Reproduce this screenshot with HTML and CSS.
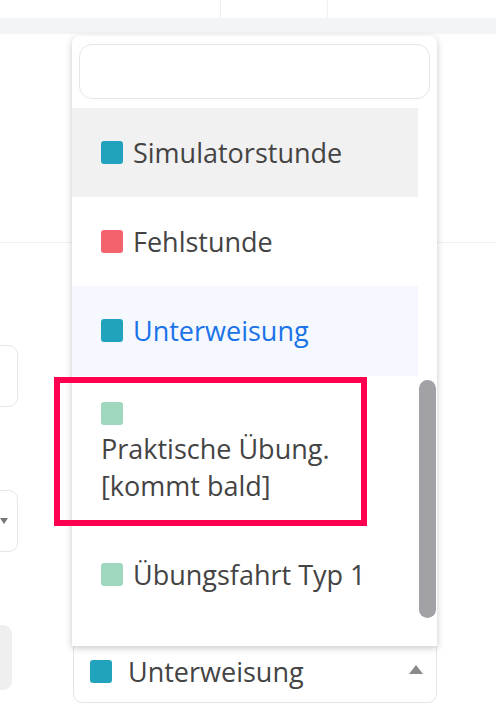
FILE: index.html
```html
<!DOCTYPE html>
<html lang="de">
<head>
<meta charset="utf-8">
<link rel="stylesheet" href="styles.css">
</head>
<body>
<div class="topbar">
  <div class="cell cell-a"></div>
  <div class="cell cell-b"></div>
  <div class="cell cell-c"></div>
</div>
<div class="band"></div>
<div class="page">
  <div class="head-section"></div>
  <div class="form">
    <div class="col-left">
      <div class="field field-1"></div>
      <div class="field field-2"><span class="mini-caret"></span></div>
      <div class="field field-3"></div>
    </div>
    <div class="col-main">
      <div class="select">
        <span class="swatch teal"></span>
        <span class="select-label">Unterweisung</span>
        <span class="caret-up"></span>
      </div>
    </div>
  </div>
</div>

<div class="popup">
  <div class="search"></div>
  <div class="list">
    <div class="options">
      <div class="option hovered"><span class="swatch teal"></span><span class="label">Simulatorstunde</span></div>
      <div class="option"><span class="swatch red"></span><span class="label">Fehlstunde</span></div>
      <div class="option selected"><span class="swatch teal"></span><span class="label">Unterweisung</span></div>
      <div class="option"><span class="swatch mint"></span><span class="label">Praktische Übung. [kommt bald]</span></div>
      <div class="option"><span class="swatch mint"></span><span class="label">Übungsfahrt Typ 1</span></div>
    </div>
    <div class="track"><div class="thumb"></div></div>
  </div>
</div>
<div class="highlight"></div>
</body>
</html>
```

FILE: styles.css
```css
* { box-sizing: border-box; }
html, body { margin: 0; padding: 0; }
body {
  width: 496px;
  height: 728px;
  overflow: hidden;
  background: #ffffff;
  font-family: "Open Sans", "Noto Sans", sans-serif;
  color: #444444;
  position: relative;
}
.topbar { height: 18px; display: flex; }
.cell { height: 18px; }
.cell-a { width: 221px; border-right: 1px solid #eeeeee; }
.cell-b { width: 107px; border-right: 1px solid #f1f1f1; }
.cell-c { flex: 1; }
.band { height: 16px; background: #f3f4f6; }
.head-section { height: 209px; border-bottom: 1px solid #f1f1f1; }
.form { display: flex; }
.col-left { width: 17px; flex: none; }
.field {
  margin-left: -20px;
  width: 38px;
  border: 1px solid #e6e6e6;
  border-radius: 9px;
  position: relative;
}
.field-1 { margin-top: 102px; height: 62px; }
.field-2 { margin-top: 83px; height: 62px; }
.field-3 { margin-top: 73px; height: 65px; width: 32px; border: none; background: #efefef; }
.mini-caret {
  position: absolute;
  left: 19px;
  top: 27px;
  border-left: 4px solid transparent;
  border-right: 4px solid transparent;
  border-top: 6px solid #777777;
}
.col-main { margin-left: 56px; width: 364px; }
.select {
  margin-top: 397px;
  height: 63px;
  border: 1px solid #e4e4e4;
  border-radius: 9px;
  display: flex;
  align-items: center;
  padding: 0 13px 0 16px;
  gap: 16px;
}
.select-label { flex: 1; font-size: 27px; line-height: 37px; color: #444444; }
.caret-up {
  border-left: 7px solid transparent;
  border-right: 7px solid transparent;
  border-bottom: 9px solid #8a8a8a;
  margin-top: -4px;
}
.swatch {
  width: 22px;
  height: 23px;
  border-radius: 3px;
  flex: none;
  display: inline-block;
}
.teal { background: #21a3bd; }
.red { background: #f2636e; }
.mint { background: #9fd8bf; }

.popup {
  position: absolute;
  left: 72px;
  top: 36px;
  width: 365px;
  height: 610px;
  background: #ffffff;
  border-radius: 7px 7px 0 0;
  box-shadow: 0 2px 7px rgba(0, 0, 0, 0.22);
  padding: 8px 7px 0 7px;
  z-index: 2;
}
.search {
  height: 55px;
  border: 1px solid #e6e6e6;
  border-radius: 13px;
}
.list {
  display: flex;
  margin: 9px -7px 0 -7px;
  height: 538px;
  overflow: hidden;
}
.options { width: 346px; flex: none; }
.option {
  display: flex;
  flex-wrap: wrap;
  align-items: center;
  column-gap: 10px;
  row-gap: 5px;
  padding: 26px 29px;
  font-size: 27px;
  line-height: 37px;
  color: #444444;
}
.hovered { background: #f1f1f1; }
.selected { background: #f5f9ff; color: #1a73e8; padding-bottom: 27px; }
.track { width: 19px; flex: none; }
.thumb {
  margin-top: 272px;
  margin-left: 1px;
  width: 17px;
  height: 238px;
  border-radius: 9px;
  background: #a2a1a6;
}
.highlight {
  position: absolute;
  left: 54px;
  top: 377px;
  width: 313px;
  height: 149px;
  border: 6px solid #ff0050;
  z-index: 3;
}
```
